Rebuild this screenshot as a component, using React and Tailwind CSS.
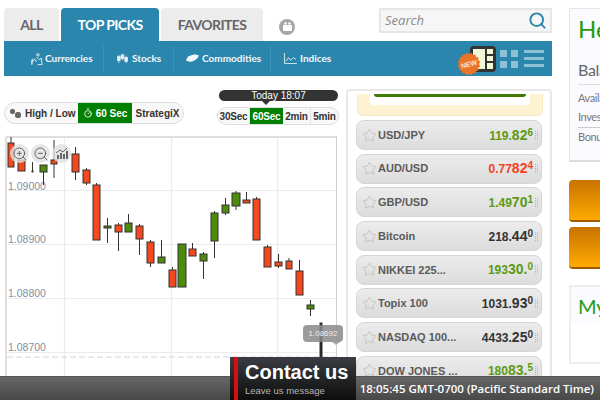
import React from 'react';
import { Search, Star, ZoomIn, ZoomOut, Timer } from 'lucide-react';

// [x0,x1,top,bottom,wickTop,wickBottom,colour]
const R = '#f4481f', G = '#4e8a0c';
const candles = [
  [8,14,143,167,137,167,R],[18,25,160,171,160,171,R],[32,33,171,172,162,172,'#222'],[40,47,165,172,165,185,G],
  [51,57,160,164,140,178,R],[72,79,154,172,147,180,R],[83,90,170,183,168,185,R],[93,100,185,240,183,240,R],
  [104,111,226,228,218,243,G],[115,122,225,232,223,251,R],[125,132,223,232,214,232,G],[136,143,226,239,224,255,R],
  [147,154,242,263,240,267,R],[158,165,257,263,240,263,G],[169,176,270,287,267,287,R],[178,186,244,287,244,287,G],
  [189,196,249,256,243,256,R],[200,207,254,261,252,279,G],[211,218,213,241,211,258,G],[222,229,205,213,198,215,G],
  [232,240,193,206,191,210,G],[243,250,200,203,192,203,R],[253,260,199,240,197,240,R],[264,271,247,267,245,267,R],
  [275,282,262,266,254,268,R],[286,292,261,269,258,269,R],[296,303,271,295,260,295,R],[307,314,305,309,300,316,G],
  [320,322,323,357,323,357,'#222'],
];

const rows = [
  ['USD/JPY','119.','82','6','g'],['AUD/USD','0.77','82','4','r'],['GBP/USD','1.49','70','1','g'],
  ['Bitcoin','218.','44','0','d'],['NIKKEI 225...','193','30.','0','g'],['Topix 100','1031.','93','0','d'],
  ['NASDAQ 100...','4433.','25','0','d'],['DOW JONES ...','180','83.','5','g'],
];
const colours = { g: 'text-[#5b9a12]', r: 'text-[#f2431c]', d: 'text-[#333333]' };

const burst = Array.from({ length: 32 }).map((_, i) => {
  const r = i % 2 ? 11.5 : 10;
  const a = (i * Math.PI) / 16;
  return `${(12 + r * Math.cos(a)).toFixed(2)},${(12 + r * Math.sin(a)).toFixed(2)}`;
}).join(' ');

const IconCurrencies = () => (
  <svg width="14" height="14" viewBox="0 0 15 14" fill="none" stroke="#e3f0f6" strokeWidth="1">
    <path d="M8 1l2 1-1 2-2-1zM2 13c0-3 1-5 3-6l2 3M7 5l3 3 2-2 1 7H8M1 9h3M3 6.500C2 7.500 2 10 2 13" />
  </svg>
);
const IconStocks = () => (
  <svg width="11" height="12" viewBox="0 0 12 13" fill="#e9f3f8" stroke="#e9f3f8" strokeWidth="0.8">
    <path d="M2 2v9M6 1v7M10 3v8" fill="none" />
    <rect x="0.5" y="4" width="3" height="4" /><rect x="4.5" y="2" width="3" height="4" /><rect x="8.5" y="5" width="3" height="4" />
  </svg>
);
const IconCommodities = () => (
  <svg width="13" height="9" viewBox="0 0 13 9" fill="#f2f7fa"><path d="M0 6c1-3 4-5 8-5.500 2 0 4 .5 5 1-1 3-4 5-7 6-3 .5-5 0-6-1.500z" /></svg>
);
const IconIndices = () => (
  <svg width="13" height="11" viewBox="0 0 14 12" fill="none" stroke="#dcecf3" strokeWidth="1"><path d="M.5 0v11.500H14M2 9l3-4 2 3 3-3 3 2" /></svg>
);

const NavItem = ({ icon, label, className }) => (
  <div className={`flex h-[25px] items-center border-r border-[#3f93b6] ${className}`}>
    {icon}
    <span className="text-[10px] font-bold whitespace-nowrap text-[#f2f8fb]">{label}</span>
  </div>
);

const PriceRow = ({ row }) => (
  <div className="flex h-[30px] shrink-0 items-center rounded-lg border border-[#d6d6d6] bg-gradient-to-b from-[#ececec] to-[#dcdcdc] pl-[5px] pr-[3px]">
    <Star size={15} strokeWidth={1.2} className="shrink-0 text-[#b9b9b9]" />
    <span className="ml-[1px] whitespace-nowrap text-[11px] font-bold text-[#5a5a5a]">{row[0]}</span>
    <span className={`ml-auto flex items-baseline font-bold ${colours[row[4]]}`}>
      <span className="text-[12px]">{row[1]}</span>
      <span className="text-[14px]">{row[2]}</span>
      <span className="relative -top-[4px] text-[10px]">{row[3]}</span>
    </span>
    <span className="ml-[2px] grid grid-cols-2 gap-[1px]">
      {Array.from({ length: 10 }).map((_, i) => <span key={i} className="h-px w-px bg-[#b5b5b5]" />)}
    </span>
  </div>
);

export default function App() {
  return (
    <div className="relative flex h-[400px] w-[600px] overflow-hidden bg-white pl-1 font-['Liberation_Sans',sans-serif]">
      <div className="flex w-[548px] shrink-0 flex-col pt-2">
        {/* tabs + search */}
        <div className="flex h-[33px] items-start font-['Lato',sans-serif] text-[14px] font-bold tracking-[-0.600px]">
          <div className="flex h-[33px] w-[55px] items-center justify-center rounded-t bg-[#ececec] text-[#666666]">ALL</div>
          <div className="ml-[2px] flex h-[33px] w-[98px] items-center justify-center rounded-t bg-[#2b86ad] text-white">TOP PICKS</div>
          <div className="ml-[2px] flex h-[33px] w-[102px] items-center justify-center rounded-t bg-[#ececec] text-[#666666]">FAVORITES</div>
          <div className="ml-4 mt-[11px] flex h-4 w-4 items-center justify-center rounded-full bg-[#a6a6a6]">
            <svg width="11" height="10" viewBox="0 0 11 10" fill="#fff"><rect x="1" y="3" width="9" height="6" rx="1" /><circle cx="3.500" cy="1.500" r="1.300" /><circle cx="7.500" cy="1.500" r="1.300" /></svg>
          </div>
          <div className="ml-auto flex h-[25px] w-[173px] items-center border-2 border-[#e6e6e6] bg-[#f6f6f6] pl-[4px] pr-[3px] tracking-normal">
            <span className="font-['Open_Sans',sans-serif] text-[13px] font-normal italic text-[#8a8a8a]">Search</span>
            <Search size={19} strokeWidth={2.4} className="ml-auto text-[#2b86ad]" />
          </div>
        </div>

        {/* nav bar */}
        <div className="relative flex h-[35px] items-center bg-[#2b86ad] font-['Lato',sans-serif]">
          <NavItem className="w-[100px] gap-[1px] pl-[26px]" icon={<IconCurrencies />} label="Currencies" />
          <NavItem className="w-[70px] gap-[4px] pl-[13px]" icon={<IconStocks />} label="Stocks" />
          <NavItem className="w-[97px] gap-[3px] pl-[12px]" icon={<IconCommodities />} label="Commodities" />
          <div className="flex items-center gap-[3px] pl-[13px]">
            <IconIndices />
            <span className="text-[10px] font-bold text-[#f2f8fb]">Indices</span>
          </div>
          <div className="ml-auto flex items-center pr-2">
            <div className="relative mr-[4px] grid h-[26px] w-[26px] grid-cols-[1fr_6px] gap-[2px] rounded bg-[#333333] p-[3px]">
              <div className="row-span-3 bg-[#f1f8d8]" />
              <div className="bg-[#f1f8d8]" /><div className="bg-[#f1f8d8]" /><div className="bg-[#f1f8d8]" />
              <svg width="24" height="24" viewBox="0 0 24 24" className="absolute -left-[13px] top-[6px]">
                <polygon points={burst} fill="#ea7428" />
                <text x="12" y="14.500" textAnchor="middle" fontSize="7" fontWeight="bold" fill="#ffe3cc" transform="rotate(-14 12 12)" fontFamily="Liberation Sans">NEW</text>
              </svg>
            </div>
            <div className="grid grid-cols-2 gap-[4px]">
              <div className="h-[7px] w-[7px] bg-[#8fc1d6]" /><div className="h-[7px] w-[7px] bg-[#8fc1d6]" />
              <div className="h-[7px] w-[7px] bg-[#8fc1d6]" /><div className="h-[7px] w-[7px] bg-[#8fc1d6]" />
            </div>
            <div className="ml-[6px] flex w-5 flex-col gap-[4px]">
              <div className="h-[3px] bg-[#8fc1d6]" /><div className="h-[3px] bg-[#8fc1d6]" /><div className="h-[3px] bg-[#8fc1d6]" />
            </div>
          </div>
        </div>

        {/* main area */}
        <div className="mt-[13px] flex min-h-0 flex-1 items-start">
          <div className="relative w-[341px] shrink-0">
            <div className="flex h-[36px] items-end justify-between">
              <div className="mb-px flex h-[22px] w-[180px] items-stretch overflow-hidden rounded-full border border-[#dddddd] bg-[#f8f8f8] text-[10px] font-bold whitespace-nowrap text-[#333333]">
                <div className="flex w-[73px] items-center gap-[4px] pl-[5px]">
                  <svg width="11" height="10" viewBox="0 0 11 10" fill="#666" className="shrink-0"><rect x="0" y="1" width="5" height="5" rx="2" /><rect x="5" y="4" width="6" height="6" rx="2.500" /></svg>
                  High / Low
                </div>
                <div className="flex w-[54px] items-center justify-center gap-[3px] bg-[#008000] text-white">
                  <Timer size={10} strokeWidth={2} />
                  60 Sec
                </div>
                <div className="flex flex-1 items-center justify-center">StrategiX</div>
              </div>
              <div className="relative mr-[6px] flex h-[18px] w-[122px] items-stretch overflow-hidden rounded-full border border-[#dddddd] bg-[#f8f8f8] text-[10px] font-bold tracking-[-0.200px] text-[#333333]">
                <div className="flex w-[32px] items-center justify-center border-r border-[#e2e2e2]">30Sec</div>
                <div className="flex w-[33px] items-center justify-center bg-[#008000] text-white">60Sec</div>
                <div className="flex w-[28px] items-center justify-center border-r border-[#e2e2e2]">2min</div>
                <div className="flex flex-1 items-center justify-center">5min</div>
              </div>
              <div className="absolute left-[215px] top-px flex h-[11px] w-[119px] items-center justify-center rounded-full bg-[#333333] text-[10px] text-white">Today 18:07</div>
              <div className="absolute left-[258px] top-[12px] h-0 w-0 border-x-[4px] border-t-[4px] border-x-transparent border-t-[#333333]" />
            </div>

            {/* chart */}
            <div className="relative mt-[5px]">
              <svg width="337" height="270" viewBox="4 130 337 270" className="block">
                <g stroke="#ececec" strokeWidth="1">
                  {[64.500, 171.500, 277.500].map((x) => <line key={x} x1={x} x2={x} y1="137" y2="400" strokeWidth="1.300" />)}
                  {[190.500, 244.500, 298.500, 352.500].map((y) => <line key={y} x1="6" x2="336" y1={y} y2={y} />)}
                </g>
                <line x1="6" x2="6" y1="137" y2="400" stroke="#dfdfdf" strokeWidth="2" />
                <line x1="6" x2="337" y1="137" y2="137" stroke="#dfdfdf" strokeWidth="2" />
                <line x1="336.500" x2="336.500" y1="137" y2="400" stroke="#cfcfcf" />
                <line x1="7" x2="336" y1="357" y2="357" stroke="#ccd3da" strokeDasharray="6 3" />
                {[['1.09000', 190], ['1.08900', 243], ['1.08800', 297], ['1.08700', 351]].map(([t, y]) => (
                  <text key={t} x="8" y={y} fontSize="10.500" fill="#7f90a3" fontFamily="Liberation Sans">{t}</text>
                ))}
                {candles.map(([a, b, t, bt, wt, wb, c], i) => {
                  const mid = (a + b) / 2;
                  return (
                    <g key={i}>
                      <line x1={mid} x2={mid} y1={wt} y2={wb} stroke="#333" strokeWidth="1" />
                      <rect x={a} y={t} width={b - a} height={bt - t} fill={c} stroke="#333" strokeWidth="1" />
                    </g>
                  );
                })}
              </svg>
              <div className="absolute left-[6px] top-[14px] flex gap-[2px]">
                {[ZoomIn, ZoomOut].map((I, i) => (
                  <div key={i} className="flex h-[19px] w-[19px] items-center justify-center rounded-full bg-[#e0e0e0]/80">
                    <I size={16} strokeWidth={1.5} className="text-[#666666]" />
                  </div>
                ))}
                <div className="flex h-[19px] w-[19px] items-center justify-center rounded-full bg-[#e0e0e0]/80">
                  <svg width="12" height="11" viewBox="0 0 12 11" fill="#666"><rect x="1" y="7" width="2" height="4" /><rect x="4" y="5" width="2" height="6" /><rect x="7" y="6" width="2" height="5" /><rect x="10" y="3" width="2" height="8" /><path d="M0 5l4-3 3 2 4-4" fill="none" stroke="#666" /></svg>
                </div>
              </div>
              <div className="absolute left-[299px] top-[195px] flex h-[17px] w-[40px] items-center justify-center rounded bg-[#8a8a8a]/85 text-[8px] text-[#eeeeee]">1.08692</div>
              <div className="absolute left-[328px] top-[212px] h-0 w-0 border-x-[4px] border-t-[3px] border-x-transparent border-t-[#a8a8a8]" />
            </div>
          </div>

          {/* price list */}
          <div className="ml-px flex h-[320px] w-[206px] shrink-0 flex-col rounded-t border-2 border-[#e8e8e8] px-[8px] pt-[3px]">
            <div className="mr-[-1px] ml-px h-[22px] shrink-0 rounded-b-md border border-t-0 border-[#f6e9c3] bg-[#fdf3d3] px-[12px]">
              <div className="h-[11px] rounded-b bg-white px-[4px]">
                <div className="h-[3px] rounded-b bg-[#3f7a00]" />
              </div>
            </div>
            <div className="mt-[4px] flex flex-col gap-[3.700px]">
              {rows.map((r) => <PriceRow key={r[0]} row={r} />)}
            </div>
          </div>
        </div>
      </div>

      {/* right column */}
      <div className="ml-[17px] flex w-[220px] shrink-0 flex-col pt-2">
        <div className="h-[154px] shrink-0 border border-[#e6e6e6] border-b-2 border-b-[#dcdcdc] bg-[#fbfbff] pl-[8px] font-['Lato',sans-serif]">
          <div className="mt-[5px] text-[24px] leading-[30px] text-[#1f9c10]">Hello</div>
          <div className="mt-[14px] border-b border-[#dddddd] pb-[2px] text-[16px] leading-[24px] tracking-[-0.300px] text-[#666666]">Balance</div>
          <div className="mt-[3px] text-[11px] leading-[19px] tracking-[-0.400px] text-[#777777]">Available</div>
          <div className="border-b border-[#cccccc] pb-[1px] text-[11px] leading-[19px] tracking-[-0.400px] text-[#777777]">Invested</div>
          <div className="text-[11px] leading-[17px] tracking-[-0.400px] text-[#777777]">Bonus</div>
        </div>
        <div className="mt-[18px] h-[42px] shrink-0 rounded-l border-b-2 border-[#a25a00] bg-gradient-to-b from-[#c87200] to-[#ffab00]" />
        <div className="mt-[5px] h-[42px] shrink-0 rounded-l border-b-2 border-[#a25a00] bg-gradient-to-b from-[#c87200] to-[#ffab00]" />
        <div className="mt-[16px] h-[79px] shrink-0 border-2 border-[#eeeeee]">
          <div className="h-[37px] bg-[#fbfbff] pl-[7px] font-['Lato',sans-serif] text-[20px] leading-[38px] text-[#1f9c10]">My Positions</div>
        </div>
      </div>

      {/* status bar, over the page */}
      <div className="absolute inset-x-0 bottom-0 flex h-[24px] items-center justify-end border-t border-[#555555] bg-gradient-to-b from-[#666666] to-[#484848] pr-[6px] font-['Open_Sans',sans-serif] text-[11.500px] font-semibold whitespace-nowrap text-white">
        18:05:45 GMT-0700 (Pacific Standard Time)
      </div>
      <div className="absolute bottom-0 left-[230px] flex h-[43px] w-[126px] bg-gradient-to-b from-[#3a3d42] to-[#0e0e0e] pl-[4px] pt-[2px] whitespace-nowrap">
        <div className="-mt-[2px] h-[43px] w-[4px] shrink-0 bg-[#d90f0f]" />
        <div className="ml-[7px] flex flex-col">
          <span className="text-[20px] font-bold leading-[27px] text-white">Contact us</span>
          <span className="text-[9.500px] leading-[9px] text-[#b5b5b5]">Leave us message</span>
        </div>
      </div>
    </div>
  );
}
